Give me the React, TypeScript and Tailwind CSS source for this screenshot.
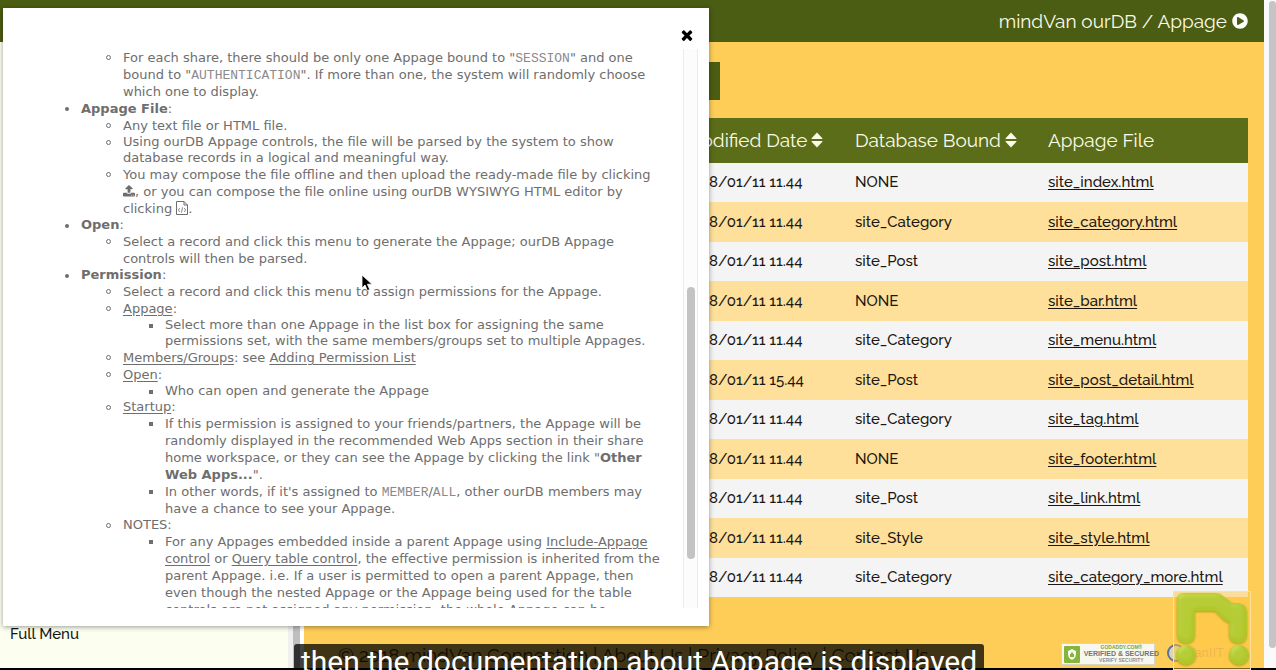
import React from 'react';
import { FaPlayCircle } from 'react-icons/fa';
import { clsx } from 'clsx';

interface AppageRow {
  modified: string;
  bound: string;
  file: string;
}

const ROWS: AppageRow[] = [
  { modified: '2018/01/11 11.44', bound: 'NONE', file: 'site_index.html' },
  { modified: '2018/01/11 11.44', bound: 'site_Category', file: 'site_category.html' },
  { modified: '2018/01/11 11.44', bound: 'site_Post', file: 'site_post.html' },
  { modified: '2018/01/11 11.44', bound: 'NONE', file: 'site_bar.html' },
  { modified: '2018/01/11 11.44', bound: 'site_Category', file: 'site_menu.html' },
  { modified: '2018/01/11 15.44', bound: 'site_Post', file: 'site_post_detail.html' },
  { modified: '2018/01/11 11.44', bound: 'site_Category', file: 'site_tag.html' },
  { modified: '2018/01/11 11.44', bound: 'NONE', file: 'site_footer.html' },
  { modified: '2018/01/11 11.44', bound: 'site_Post', file: 'site_link.html' },
  { modified: '2018/01/11 11.44', bound: 'site_Style', file: 'site_style.html' },
  { modified: '2018/01/11 11.44', bound: 'site_Category', file: 'site_category_more.html' },
];

function SortIcon() {
  return (
    <svg viewBox="0 0 12 16" className="inline-block w-3 h-4 ml-1 -mt-1" fill="currentColor" aria-hidden="true">
      <path d="M6 0.5 11.4 6.2Q11.8 7 11 7H1Q.2 7 .6 6.2Z" />
      <path d="M6 15.5 11.4 9.8Q11.8 9 11 9H1Q.2 9 .6 9.8Z" />
    </svg>
  );
}

function CloseIcon() {
  return (
    <svg viewBox="0 0 1792 1792" className="w-4 h-4" fill="currentColor" aria-hidden="true">
      <path d="M1490 1322q0 40-28 68l-136 136q-28 28-68 28t-68-28l-294-294-294 294q-28 28-68 28t-68-28l-136-136q-28-28-28-68t28-68l294-294-294-294q-28-28-28-68t28-68l136-136q28-28 68-28t68 28l294 294 294-294q28-28 68-28t68 28l136 136q28 28 28 68t-28 68l-294 294 294 294q28 28 28 68z" />
    </svg>
  );
}

function UploadIcon() {
  return (
    <svg viewBox="64 128 1664 1536" className="inline-block w-3 h-3 -mt-1" fill="currentColor" aria-label="upload">
      <path d="M1344 1472q0-26-19-45t-45-19-45 19-19 45 19 45 45 19 45-19 19-45zm256 0q0-26-19-45t-45-19-45 19-19 45 19 45 45 19 45-19 19-45zm128-224v320q0 40-28 68t-68 28h-1472q-40 0-68-28t-28-68v-320q0-40 28-68t68-28h427q21 56 70.500 92t110.500 36h256q61 0 110.500-36t70.500-92h427q40 0 68 28t28 68zm-325-648q-17 40-59 40h-256v448q0 26-19 45t-45 19h-256q-26 0-45-19t-19-45v-448h-256q-42 0-59-40-17-39 14-69l448-448q18-19 45-19t45 19l448 448q31 30 14 69z" />
    </svg>
  );
}

function FileCodeIcon() {
  return (
    <svg viewBox="0 0 12 14" className="inline-block w-3 h-[14px] -mt-1" fill="none" stroke="currentColor" strokeLinejoin="round" aria-label="edit online">
      <path d="M.5.5h7.5l3.500 3.500v9.500H.5Z" />
      <path d="M8 .5V4h3.500" />
      <path d="M3.800 7 2.300 9l1.500 2M8.200 7l1.500 2-1.500 2M6.600 6.300 5.400 11.700" strokeWidth="0.800" />
    </svg>
  );
}

function Code({ children }: { children: React.ReactNode }) {
  return <code className="font-['Liberation_Mono'] text-[13px] leading-none text-[#8a8a8a]">{children}</code>;
}

function Ref({ children }: { children: React.ReactNode }) {
  return <a href="#" className="underline underline-offset-2">{children}</a>;
}

// bullet styles per nesting level: disc, circle, square
const MARKS = {
  disc: 'mt-[7px] -ml-4 w-1 h-1 rounded-full bg-[#6e6e6e]',
  circle: 'mt-[6px] -ml-[17px] w-[5px] h-[5px] rounded-full border border-[#6e6e6e]',
  square: 'mt-[7px] -ml-4 w-1 h-1 bg-[#6e6e6e]',
};

function Item({ mark, tight, children }: { mark: keyof typeof MARKS; tight?: boolean; children: React.ReactNode }) {
  return (
    <li className={clsx('flex', tight ? 'leading-[16px]' : 'leading-[17px]')}>
      <span className={clsx('shrink-0 mr-3', MARKS[mark])} />
      <div>{children}</div>
    </li>
  );
}

function HelpContent() {
  return (
    <ul className="pl-[78px]">
      <li>
        <ul className="pl-[42px]">
          <Item mark="circle">
            For each share, there should be only one Appage bound to "<Code>SESSION</Code>" and one<br />
            bound to "<Code>AUTHENTICATION</Code>". If more than one, the system will randomly choose<br />
            which one to display.
          </Item>
        </ul>
      </li>
      <Item mark="disc"><strong>Appage File</strong>:</Item>
      <li>
        <ul className="pl-[42px]">
          <Item mark="circle">Any text file or HTML file.</Item>
          <Item mark="circle" tight>
            Using ourDB Appage controls, the file will be parsed by the system to show<br />
            database records in a logical and meaningful way.
          </Item>
          <Item mark="circle">
            You may compose the file offline and then upload the ready-made file by clicking<br />
            <UploadIcon />, or you can compose the file online using ourDB WYSIWYG HTML editor by<br />
            clicking <FileCodeIcon />.
          </Item>
        </ul>
      </li>
      <Item mark="disc" tight><strong>Open</strong>:</Item>
      <li>
        <ul className="pl-[42px]">
          <Item mark="circle">
            Select a record and click this menu to generate the Appage; ourDB Appage<br />
            controls will then be parsed.
          </Item>
        </ul>
      </li>
      <Item mark="disc" tight><strong>Permission</strong>:</Item>
      <li>
        <ul className="pl-[42px]">
          <Item mark="circle">Select a record and click this menu to assign permissions for the Appage.</Item>
          <Item mark="circle"><Ref>Appage</Ref>:</Item>
          <li>
            <ul className="pl-[42px]">
              <Item mark="square" tight>
                Select more than one Appage in the list box for assigning the same<br />
                permissions set, with the same members/groups set to multiple Appages.
              </Item>
            </ul>
          </li>
          <Item mark="circle"><Ref>Members/Groups</Ref>: see <Ref>Adding Permission List</Ref></Item>
          <Item mark="circle"><Ref>Open</Ref>:</Item>
          <li>
            <ul className="pl-[42px]">
              <Item mark="square" tight>Who can open and generate the Appage</Item>
            </ul>
          </li>
          <Item mark="circle" tight><Ref>Startup</Ref>:</Item>
          <li>
            <ul className="pl-[42px]">
              <Item mark="square">
                If this permission is assigned to your friends/partners, the Appage will be<br />
                randomly displayed in the recommended Web Apps section in their share<br />
                home workspace, or they can see the Appage by clicking the link "<strong>Other<br />
                Web Apps...</strong>".
              </Item>
              <Item mark="square">
                In other words, if it's assigned to <Code>MEMBER</Code>/<Code>ALL</Code>, other ourDB members may<br />
                have a chance to see your Appage.
              </Item>
            </ul>
          </li>
          <Item mark="circle" tight>NOTES:</Item>
          <li>
            <ul className="pl-[42px]">
              <Item mark="square">
                For any Appages embedded inside a parent Appage using <Ref>Include-Appage<br />
                control</Ref> or <Ref>Query table control</Ref>, the effective permission is inherited from the<br />
                parent Appage. i.e. If a user is permitted to open a parent Appage, then<br />
                even though the nested Appage or the Appage being used for the table<br />
                controls are not assigned any permission, the whole Appage can be
              </Item>
            </ul>
          </li>
        </ul>
      </li>
    </ul>
  );
}

function HelpDialog() {
  return (
    <div
      role="dialog"
      aria-label="Appage help"
      className="absolute left-[3px] top-2 w-[706px] h-[618px] bg-white shadow-[0_1px_5px_rgba(0,0,0,0.4)] flex flex-col pt-[19px] pb-[18px]"
    >
      <button type="button" aria-label="Close" className="self-end mr-[14px] text-black">
        <CloseIcon />
      </button>
      <div className="flex flex-1 min-h-0 mt-[6px] mr-[11px]">
        <div className="flex-1 min-w-0 overflow-hidden whitespace-nowrap font-['DejaVu_Sans',Verdana,sans-serif] text-[13px] text-[#6e6e6e]">
          <HelpContent />
        </div>
        <div className="w-[15px] shrink-0 border-x border-[#ececec] bg-[#fcfcfc] flex flex-col items-center pt-[238px]">
          <div className="w-2 h-[272px] rounded-full bg-[#c3c3c3]" />
        </div>
      </div>
    </div>
  );
}

function AppageTable() {
  return (
    <table className="w-full table-fixed text-left whitespace-nowrap text-[15px] font-medium text-[#1c1712]">
      <colgroup>
        <col />
        <col className="w-[170px]" />
        <col className="w-[193px]" />
        <col className="w-[216px]" />
      </colgroup>
      <thead className="bg-[#5b6d18] text-[19px] text-[#fbfbea]">
        <tr className="h-[45px]">
          <th />
          <th className="font-normal px-4">Modified Date<SortIcon /></th>
          <th className="font-normal px-4">Database Bound<SortIcon /></th>
          <th className="font-normal px-4">Appage File</th>
        </tr>
      </thead>
      <tbody>
        {ROWS.map((row, i) => (
          <tr key={row.file} className={i % 2 ? 'bg-[#fee09a] h-10' : 'bg-[#f4f4f4] h-[39px]'}>
            <td />
            <td className="px-4">{row.modified}</td>
            <td className="px-4">{row.bound}</td>
            <td className="px-4">
              <a href="#" className="underline underline-offset-2">{row.file}</a>
            </td>
          </tr>
        ))}
      </tbody>
    </table>
  );
}

function VerifiedSeal() {
  return (
    <div className="w-[94px] h-[22px] bg-[#f7f7f0] border border-[#d6d6c8] flex items-center gap-1 px-[2px] font-['Liberation_Sans',Arial,sans-serif] font-bold text-center">
      <svg viewBox="0 0 16 17" className="w-4 h-[17px] shrink-0" aria-hidden="true">
        <rect width="16" height="17" rx="1" fill="#86b53c" />
        <path d="M8 3 12 5v3q0 4-4 6-4-2-4-6V5Z" fill="#f7f7f0" />
        <path d="M6 8h4v3H6ZM7 8V6.500h2V8" fill="#86b53c" />
      </svg>
      <div className="flex-1 whitespace-nowrap">
        <div className="text-[5px] leading-[5px] text-[#7ba632]">GODADDY.COM®</div>
        <div className="text-[7px] leading-[7px] text-[#6f7478]">VERIFIED &amp; SECURED</div>
        <div className="text-[5px] leading-[6px] text-[#8b8f92]">VERIFY SECURITY</div>
      </div>
    </div>
  );
}

function Watermark() {
  return (
    <svg viewBox="0 0 78 79" className="absolute right-[25px] bottom-0 w-[78px] h-[79px]" aria-hidden="true">
      <defs>
        <linearGradient id="leaf" x1="0" y1="0" x2="1" y2="1">
          <stop offset="0" stopColor="#b4cb2c" />
          <stop offset="1" stopColor="#b1c928" />
        </linearGradient>
        <filter id="bevel" x="-10%" y="-10%" width="120%" height="120%">
          <feGaussianBlur in="SourceAlpha" stdDeviation="2" result="soft" />
          <feSpecularLighting in="soft" surfaceScale="2" specularConstant="0.400" specularExponent="14" lightingColor="#f0ff90" result="shine">
            <feDistantLight azimuth="235" elevation="45" />
          </feSpecularLighting>
          <feComposite in="shine" in2="SourceAlpha" operator="in" result="lit" />
          <feComposite in="SourceGraphic" in2="lit" operator="arithmetic" k1="0" k2="1" k3="0.500" k4="0" result="body" />
          <feDropShadow in="body" dx="0" dy="1" stdDeviation="1" floodColor="#86921c" floodOpacity="0.8" />
        </filter>
      </defs>
      <rect x="0.500" y="0.500" width="77" height="78" fill="#ffc640" fillOpacity="0.5" stroke="#ffe29a" />
      <g fill="url(#leaf)" fillOpacity="0.900" filter="url(#bevel)">
        <path d="M4 9Q4 2 11 2H43Q47 2 50 5L59 12H65Q74 13 74 21V43Q74 52 65 52T56 43V31Q52 31 49 27L42 20H22V43Q22 52 13 52T4 43Z" />
        <circle cx="13" cy="64" r="10" />
        <circle cx="66" cy="64" r="10" />
      </g>
    </svg>
  );
}

export default function App() {
  return (
    <div className="relative h-screen overflow-hidden flex bg-white font-[Raleway,Lato,sans-serif]">
      <div className="flex-1 min-w-0 flex flex-col border-b-2 border-black">
        <header className="h-[42px] shrink-0 bg-[#4b5d12] flex items-center justify-end gap-[5px] pr-4 text-[19px] text-[#fbfbea]">
          <span>mindVan ourDB / Appage</span>
          <FaPlayCircle className="w-4 h-4 text-white" />
        </header>
        <div className="flex flex-1 min-h-0">
          <aside className="w-[304px] shrink-0 flex items-stretch bg-[#fcfff0]">
            <nav className="flex-1 flex flex-col justify-end pl-[10px] pb-[22px]">
              <a href="#" className="text-[15px] font-medium leading-6 text-[#14140f]">Full Menu</a>
            </nav>
            <div className="w-4 bg-[#f0f0f0] border-r-4 border-white pl-[5px]">
              <div className="h-full bg-[#bfbfc2]" />
            </div>
          </aside>
          <main className="flex-1 min-w-0 bg-[#fecd57] px-4 pt-5 flex flex-col">
            <button type="button" aria-label="Actions" className="w-[400px] h-[38px] shrink-0 mb-[18px] bg-[#4b5d12]" />
            <AppageTable />
            <footer className="flex-1 flex justify-between pt-[46px]">
              <p className="pl-[18px] text-[19px] leading-6 whitespace-nowrap text-[#3a2f10]">
                © 2018 mindVan Connection | <a href="#">About Us</a> | <a href="#">Privacy Policy</a> | <a href="#">Contact Us</a>
              </p>
              <div className="flex items-start gap-3 mr-6">
                <VerifiedSeal />
                <div className="flex items-center gap-[2px] font-['Liberation_Sans'] text-[13px] leading-5 text-[#d9a860]">
                  <span className="w-[18px] h-[18px] rounded-full border-2 border-[#5f70a0] bg-[#d8d8b0]" />
                  VanIIT
                </div>
              </div>
            </footer>
          </main>
        </div>
      </div>

      {/* page scrollbar */}
      <div className="w-3 shrink-0 bg-[#fafafa] pl-[5px] pt-[1px] border-b-2 border-black">
        <div className="h-[647px] rounded-full bg-[#c5c4c8]" />
      </div>

      <HelpDialog />

      <svg viewBox="0 0 12 18" className="absolute left-[361px] top-[274px] w-3 h-[18px]" aria-hidden="true">
        <path d="M1 1v13l3-3 2.400 5.600 2.400-1L6.400 10.200H11Z" fill="#000" stroke="#fff" strokeWidth="0.800" />
      </svg>

      <Watermark />

      <div className="absolute left-[294px] top-[644px] h-10 px-[7px] rounded-[3px] bg-black/75 whitespace-nowrap font-[Roboto,sans-serif] text-[30px] leading-[36px] text-white">
        then the documentation about Appage is displayed
      </div>
    </div>
  );
}
